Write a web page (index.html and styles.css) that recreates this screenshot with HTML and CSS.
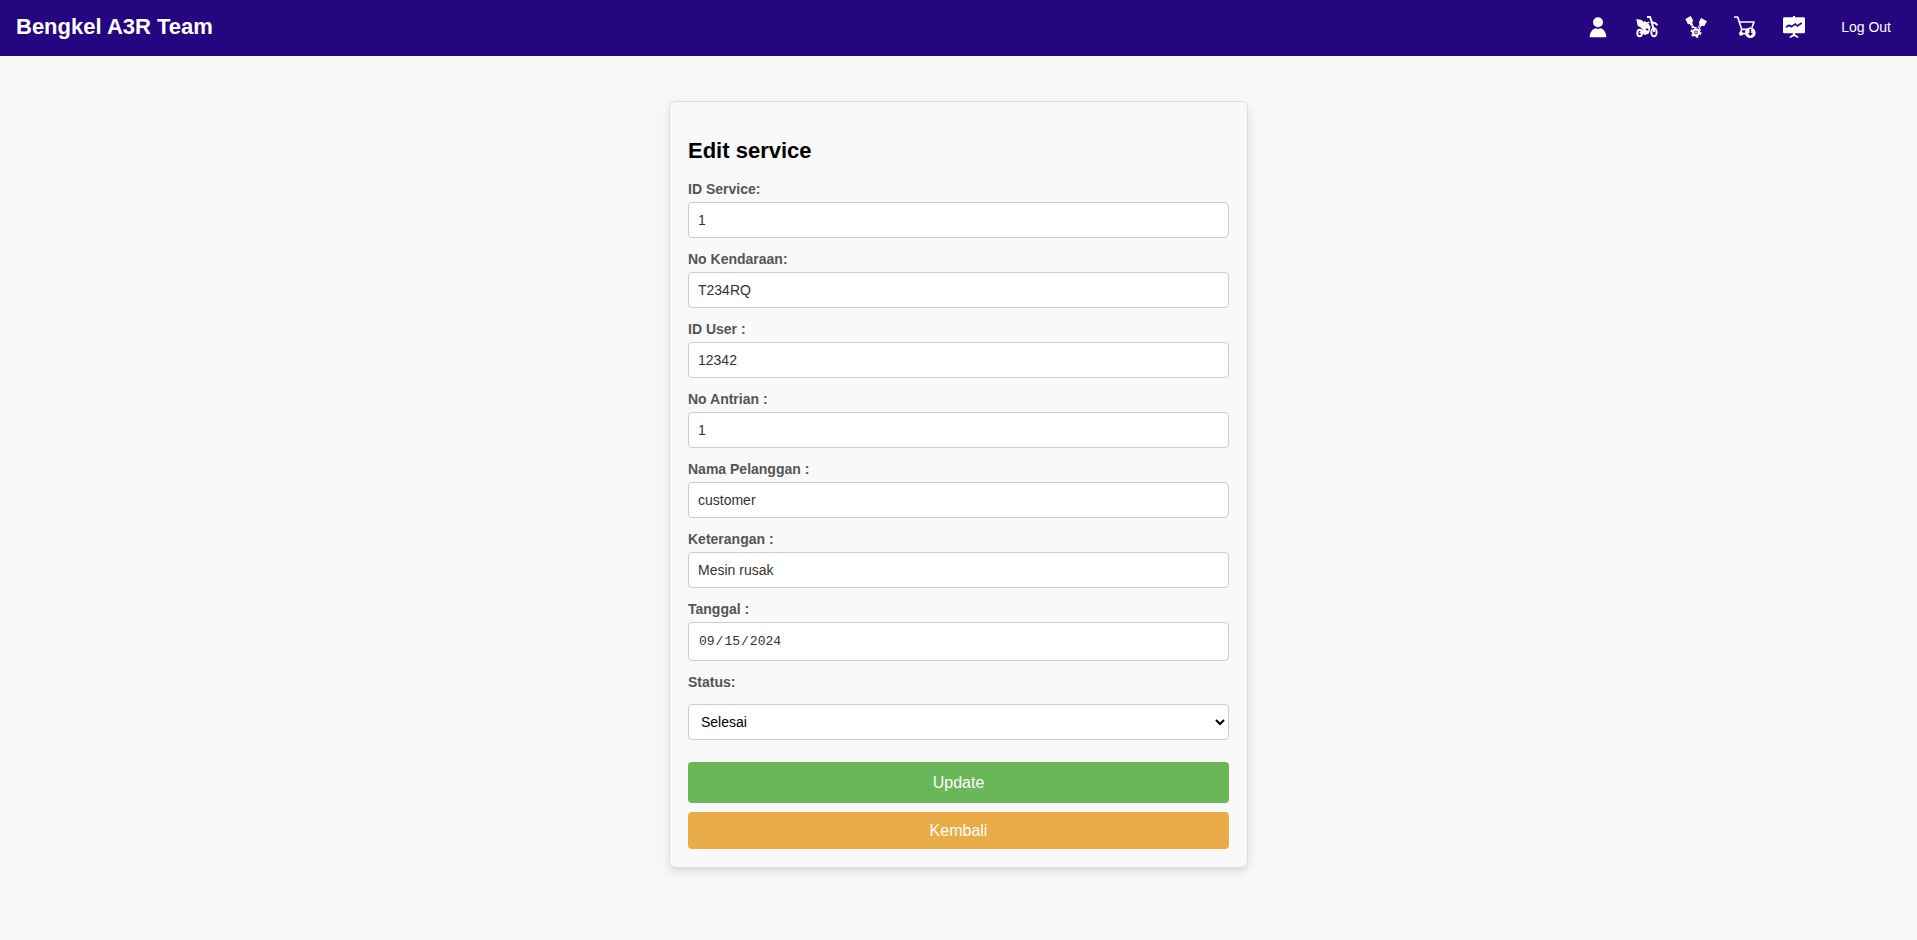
FILE: index.html
```html
<!DOCTYPE html>
<html lang="en-US">
<head>
<meta charset="utf-8">
<meta name="viewport" content="width=device-width, initial-scale=1">
<title>Edit service</title>
<link rel="stylesheet" href="styles.css">
</head>
<body>
<header class="navbar">
  <span class="brand">Bengkel A3R Team</span>
  <nav class="menu">
    <a class="menu-icon" href="#user" aria-label="User">
      <svg viewBox="0 0 66 66"><circle cx="33" cy="19" r="15"/><path d="M8 64C8 48 18 38 27 37Q33 41 39 37C49 38 58 48 58 64Z"/></svg>
    </a>
    <a class="menu-icon" href="#kendaraan" aria-label="Kendaraan">
      <svg viewBox="0 0 66 66"><g fill="none" stroke="#fff"><ellipse cx="11" cy="51" rx="7" ry="10" stroke-width="6"/><ellipse cx="54" cy="49" rx="8" ry="12" stroke-width="6"/><path d="M33 3h9l5 14 8 31" stroke-width="6"/><path d="M24 17q6 7 16 2" stroke-width="5"/><path d="M44 20q14-2 20 8" stroke-width="6"/><path d="M11 51l16-9" stroke-width="5"/></g><path d="M1 9l16 3 9 9 12 3 6 8-3 13-3 8-12 4-7-5 3-8-7-9-10-6Z"/><path d="M30 39l7 3" stroke="#250580" stroke-width="5"/></svg>
    </a>
    <a class="menu-icon" href="#sparepart" aria-label="Sparepart">
      <svg viewBox="0 0 66 66"><path d="M1 9L17 0l8 14-7 9-9 2ZM48 6l18 10-8 14-9-1-8-9Z"/><path d="M17 20l8 16M49 24l-8 12" stroke="#fff" stroke-width="8" stroke-dasharray="9 2"/><circle cx="33" cy="49" r="9" fill="none" stroke="#fff" stroke-width="7"/><circle cx="33" cy="49" r="14" fill="none" stroke="#fff" stroke-width="5" stroke-dasharray="7 7.660"/><circle cx="33" cy="49" r="3"/></svg>
    </a>
    <a class="menu-icon" href="#transaksi" aria-label="Transaksi">
      <svg viewBox="0 0 66 66"><path d="M0 3h11l12 37h18M16 18h44l-6 16M23 40l-4 13h14" fill="none" stroke="#fff" stroke-width="5" stroke-linejoin="round"/><circle cx="21" cy="53" r="6"/><circle cx="49" cy="50" r="16"/><path d="M49 39v16" fill="none" stroke="#250580" stroke-width="5"/><path d="M41 51h16l-8 9Z" fill="#250580"/></svg>
    </a>
    <a class="menu-icon" href="#laporan" aria-label="Laporan">
      <svg viewBox="0 0 66 66"><path d="M30 0h6v4h26q4 0 4 4v40q0 4-4 4H36v3l11 7-3 4-11-6-11 6-3-4 11-7v-3H4q-4 0-4-4V8q0-4 4-4h26Z"/><path d="M9 34q5-5 9-6 4 1 7 4l12-8 6 6 13-9" fill="none" stroke="#250580" stroke-width="5"/></svg>
    </a>
    <a class="logout" href="#logout">Log Out</a>
  </nav>
</header>
<main class="page">
  <form class="card">
    <h2 class="title">Edit service</h2>
    <div class="field"><label for="id-service">ID Service:</label><input class="control" id="id-service" type="text" value="1"></div>
    <div class="field"><label for="no-kendaraan">No Kendaraan:</label><input class="control" id="no-kendaraan" type="text" value="T234RQ"></div>
    <div class="field"><label for="id-user">ID User :</label><input class="control" id="id-user" type="text" value="12342"></div>
    <div class="field"><label for="no-antrian">No Antrian :</label><input class="control" id="no-antrian" type="text" value="1"></div>
    <div class="field"><label for="nama">Nama Pelanggan :</label><input class="control" id="nama" type="text" value="customer"></div>
    <div class="field"><label for="keterangan">Keterangan :</label><input class="control" id="keterangan" type="text" value="Mesin rusak"></div>
    <div class="field"><label for="tanggal">Tanggal :</label><input class="control control-date" id="tanggal" type="date" value="2024-09-15"></div>
    <div class="field field-status"><label for="status">Status:</label><select class="control control-select" id="status"><option>Selesai</option></select></div>
    <div class="actions">
      <button class="button button-update" type="submit">Update</button>
      <a class="button button-back" href="#kembali">Kembali</a>
    </div>
  </form>
</main>
</body>
</html>
```

FILE: styles.css
```css
* {
  box-sizing: border-box;
}

body {
  margin: 0;
  background: #f7f7f7;
  font-family: "Liberation Sans", Arial, sans-serif;
  font-size: 14px;
  line-height: 16px;
}

.navbar {
  display: flex;
  align-items: center;
  justify-content: space-between;
  min-height: 56px;
  padding: 0 26px 2px 16px;
  background: #250580;
  color: #fff;
}

.brand {
  font-size: 22px;
  font-weight: bold;
  line-height: 24px;
}

.menu {
  display: flex;
  align-items: center;
  gap: 27px;
}

.menu-icon,
.menu-icon svg {
  display: block;
  width: 22px;
  height: 22px;
  fill: #fff;
}

.logout {
  margin-left: 9px;
  color: #fff;
  text-decoration: none;
}

.page {
  padding: 45px 16px;
}

.card {
  max-width: 579px;
  margin: 0 auto;
  padding: 18px;
  background: #f9f9f9;
  border: 1px solid #ddd;
  border-radius: 7px;
  box-shadow: 0 4px 8px rgba(0, 0, 0, 0.1);
}

.title {
  margin: 18px 0;
  font-size: 22px;
  line-height: 25px;
}

.field {
  display: flex;
  flex-direction: column;
  gap: 5px;
  margin-bottom: 13px;
  color: #555;
  font-weight: bold;
}

.field-status {
  gap: 14px;
}

.control {
  width: 100%;
  height: 36px;
  padding: 0 9px;
  background: #fff;
  border: 1px solid #ccc;
  border-radius: 4px;
  color: #333;
  font: 14px "Liberation Sans", Arial, sans-serif;
}

.control-date {
  height: 39px;
  font: 13px "Liberation Mono", monospace;
}

.control-date::-webkit-calendar-picker-indicator {
  display: none;
}

.control-select {
  padding: 0 8px;
  color: #000;
}

.actions {
  display: flex;
  flex-direction: column;
  gap: 9px;
  padding-top: 9px;
}

.button {
  padding: 9px;
  border: 0;
  border-radius: 4px;
  color: #fff;
  font: 16px/19px "Liberation Sans", Arial, sans-serif;
  text-align: center;
  text-decoration: none;
}

.button-update {
  padding: 11px;
  background: #6ab759;
}

.button-back {
  background: #eaac46;
}
```
